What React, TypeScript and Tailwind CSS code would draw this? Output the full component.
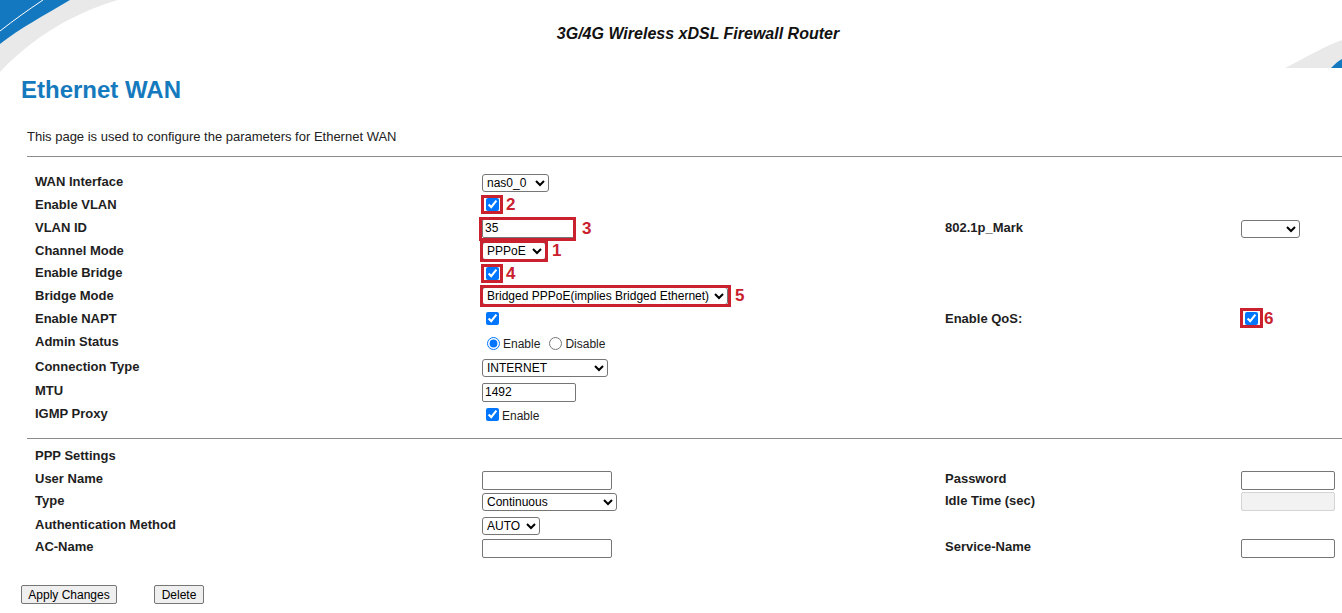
import React from "react";

const RED = "border-[#c9212e]";

interface MarkProps {
  n: string,
  box: string,
  gap: string,
  children: React.ReactNode,
}

// red frame + number drawn over a form control (annotation)
const Mark = (props: MarkProps) => {
  return (
    <span className="inline-flex items-center">
      <span className="relative inline-flex items-center">
        {props.children}
        <span className={`absolute border-[3px] ${RED} ${props.box}`} />
      </span>
      <span className={`text-[17px] leading-none font-bold text-[#c9212e] ${props.gap}`}>{props.n}</span>
    </span>
  )
}

const Label = ({ children }: { children: React.ReactNode }) => (
  <div className="text-[13px] font-bold text-[#1e1e1e]">{children}</div>
)

const selectCls = "h-[18px] border border-[#767676] rounded-[3px] bg-white text-[12px] text-black"
const inputCls = "h-[19px] border border-[#767676] rounded-[2px] bg-white text-[12px] text-black px-[2px]"

const Check = () => (
  <input type="checkbox" defaultChecked className="ml-[4px] w-[13px] h-[13px]" />
)

const Row = ({ h, children }: { h: string, children: React.ReactNode }) => (
  <div className={`grid grid-cols-[447px_463px_296px_1fr] items-center ${h}`}>
    {children}
  </div>
)

const Header = () => (
  <div className="flex h-[68px] items-start">
    <svg width="125" height="72" viewBox="0 0 125 72" className="shrink-0">
      <path d="M0 72 C30 40 70 14 118 0 L70 0 C45 15 20 28 0 44 Z" fill="#e9e9e9" />
      <path d="M0 0 H70 C45 15 20 28 0 44 Z" fill="#1478c0" />
      <path d="M0 31 C14 20 28 10 43 0" stroke="#ffffff" strokeWidth="1" fill="none" />
    </svg>
    <div className="flex-1 pt-[25px] pr-[14px] text-center text-[16px] font-bold italic text-[#111] leading-[18px]">
      3G/4G Wireless xDSL Firewall Router
    </div>
    <svg width="57" height="30" viewBox="0 0 57 30" className="shrink-0 self-end">
      <path d="M0 30 C20 20 40 8 57 2 V30 Z" fill="#e9e9e9" />
      <path d="M46 30 C50 26 53 23 57 21 V30 Z" fill="#1478c0" />
    </svg>
  </div>
)

export default function App() {
  return (
    <div className="w-[1342px] h-[613px] overflow-hidden bg-white font-['Liberation_Sans',Arial,sans-serif] text-[#1e1e1e]">
      <Header />

      <h1 className="mt-[8px] pl-[21px] h-[28px] leading-[28px] text-[24px] font-bold text-[#1579bd]">
        Ethernet WAN
      </h1>

      <div className="pl-[27px]">
        <p className="mt-[25px] text-[13px] leading-[16px] text-[#222]">
          This page is used to configure the parameters for Ethernet WAN
        </p>
        <div className="mt-[11px] h-px bg-[#8c8c8c]" />

        <div className="pl-[8px] mt-[13px]">
          <Row h="h-[23px]">
            <Label>WAN Interface</Label>
            <div>
              <select className={`${selectCls} w-[67px]`} defaultValue="nas0_0">
                <option>nas0_0</option>
              </select>
            </div>
          </Row>
          <Row h="h-[23px]">
            <Label>Enable VLAN</Label>
            <div className="flex">
              <Mark n="2" box="-left-[1px] -right-[4px] -top-[3px] -bottom-[3px]" gap="ml-[7px]">
                <Check />
              </Mark>
            </div>
          </Row>
          <Row h="h-[23px]">
            <Label>VLAN ID</Label>
            <div className="flex">
              <Mark n="3" box="-left-[3px] right-0 -top-[2px] -bottom-[3px]" gap="ml-[6px]">
                <input className={`${inputCls} w-[94px] bg-[#e8f0fe]`} defaultValue="35" />
              </Mark>
            </div>
            <Label>802.1p_Mark</Label>
            <div>
              <select className={`${selectCls} w-[59px]`}>
                <option></option>
              </select>
            </div>
          </Row>
          <Row h="h-[23px]">
            <Label>Channel Mode</Label>
            <div className="flex">
              <Mark n="1" box="-left-[2px] -right-[2px] -top-[2px] -bottom-[2px]" gap="ml-[6px]">
                <select className={`${selectCls} w-[64px]`} defaultValue="PPPoE">
                  <option>PPPoE</option>
                </select>
              </Mark>
            </div>
          </Row>
          <Row h="h-[22px]">
            <Label>Enable Bridge</Label>
            <div className="flex">
              <Mark n="4" box="-left-[1px] -right-[4px] -top-[3px] -bottom-[3px]" gap="ml-[7px]">
                <Check />
              </Mark>
            </div>
          </Row>
          <Row h="h-[23px]">
            <Label>Bridge Mode</Label>
            <div className="flex">
              <Mark n="5" box="-left-[2px] -right-[3px] -top-[2px] -bottom-[2px]" gap="ml-[7px]">
                <select className={`${selectCls} w-[246px]`}>
                  <option>Bridged PPPoE(implies Bridged Ethernet)</option>
                </select>
              </Mark>
            </div>
          </Row>
          <Row h="h-[23px]">
            <Label>Enable NAPT</Label>
            <div className="flex">
              <Check />
            </div>
            <Label>Enable QoS:</Label>
            <div className="flex">
              <Mark n="6" box="-left-[1px] -right-[5px] -top-[4px] -bottom-[3px]" gap="ml-[6px]">
                <Check />
              </Mark>
            </div>
          </Row>
          <Row h="h-[24px]">
            <Label>Admin Status</Label>
            <div className="flex items-center text-[12px] text-[#1e1e1e] pt-[3px]">
              <input type="radio" name="adm" defaultChecked className="ml-[5px] w-[13px] h-[13px]" />
              <span className="ml-[3px]">Enable</span>
              <input type="radio" name="adm" className="ml-[9px] w-[13px] h-[13px]" />
              <span className="ml-[3px]">Disable</span>
            </div>
          </Row>
          <Row h="h-[25px]">
            <Label>Connection Type</Label>
            <div>
              <select className={`${selectCls} w-[126px]`}>
                <option>INTERNET</option>
              </select>
            </div>
          </Row>
          <Row h="h-[23px]">
            <Label>MTU</Label>
            <div>
              <input className={`${inputCls} w-[94px]`} defaultValue="1492" />
            </div>
          </Row>
          <Row h="h-[24px]">
            <Label>IGMP Proxy</Label>
            <div className="flex items-center text-[12px] pt-[3px]">
              <input type="checkbox" defaultChecked className="ml-[4px] w-[13px] h-[13px] -mt-[3px]" />
              <span className="ml-[3px]">Enable</span>
            </div>
          </Row>
        </div>

        <div className="mt-[12px] h-px bg-[#8c8c8c]" />

        <div className="pl-[8px] mt-[6px]">
          <Row h="h-[22px]">
            <Label>PPP Settings</Label>
          </Row>
          <Row h="h-[22px]">
            <Label>User Name</Label>
            <div>
              <input className={`${inputCls} w-[130px]`} />
            </div>
            <Label>Password</Label>
            <div>
              <input type="password" className={`${inputCls} w-[94px]`} />
            </div>
          </Row>
          <Row h="h-[24px]">
            <Label>Type</Label>
            <div>
              <select className={`${selectCls} w-[135px]`}>
                <option>Continuous</option>
              </select>
            </div>
            <Label>Idle Time (sec)</Label>
            <div>
              <input disabled className="h-[19px] w-[94px] border border-[#d4d4d4] rounded-[2px] bg-[#f2f2f2]" />
            </div>
          </Row>
          <Row h="h-[22px]">
            <Label>Authentication Method</Label>
            <div>
              <select className={`${selectCls} w-[58px]`}>
                <option>AUTO</option>
              </select>
            </div>
          </Row>
          <Row h="h-[24px]">
            <Label>AC-Name</Label>
            <div>
              <input className={`${inputCls} w-[130px]`} />
            </div>
            <Label>Service-Name</Label>
            <div>
              <input className={`${inputCls} w-[94px]`} />
            </div>
          </Row>
        </div>
      </div>

      <div className="mt-[26px] pl-[21px] flex items-center">
        <button className="h-[19px] w-[96px] border border-[#767676] rounded-[2px] bg-[#efefef] text-[12px] text-black">
          Apply Changes
        </button>
        <button className="ml-[37px] h-[19px] w-[50px] border border-[#767676] rounded-[2px] bg-[#efefef] text-[12px] text-black">
          Delete
        </button>
      </div>
    </div>
  )
}
